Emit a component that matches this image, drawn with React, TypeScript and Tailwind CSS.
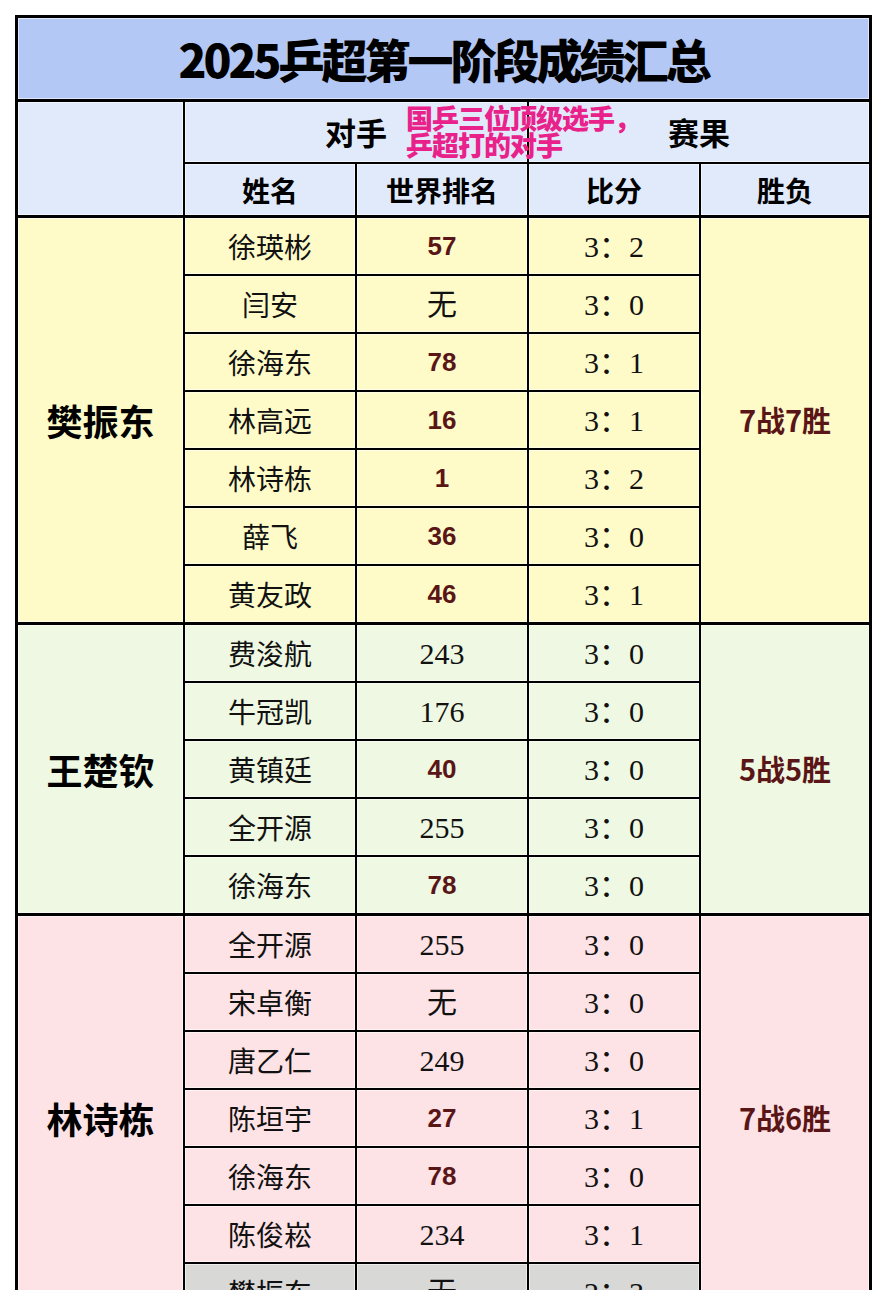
import React from 'react';

type Match = { name: string; rank: string; score: string; lost?: boolean };
type Group = { player: string; result: string; bg: string; span: string; rows: Match[] };

const GROUPS: Group[] = [
  {
    player: '樊振东',
    result: '7战7胜',
    bg: 'bg-[#fefbc9]',
    span: 'row-span-7',
    rows: [
      { name: '徐瑛彬', rank: '57', score: '3：2' },
      { name: '闫安', rank: '无', score: '3：0' },
      { name: '徐海东', rank: '78', score: '3：1' },
      { name: '林高远', rank: '16', score: '3：1' },
      { name: '林诗栋', rank: '1', score: '3：2' },
      { name: '薛飞', rank: '36', score: '3：0' },
      { name: '黄友政', rank: '46', score: '3：1' },
    ],
  },
  {
    player: '王楚钦',
    result: '5战5胜',
    bg: 'bg-[#eef8e2]',
    span: 'row-span-5',
    rows: [
      { name: '费浚航', rank: '243', score: '3：0' },
      { name: '牛冠凯', rank: '176', score: '3：0' },
      { name: '黄镇廷', rank: '40', score: '3：0' },
      { name: '全开源', rank: '255', score: '3：0' },
      { name: '徐海东', rank: '78', score: '3：0' },
    ],
  },
  {
    player: '林诗栋',
    result: '7战6胜',
    bg: 'bg-[#fde3e6]',
    span: 'row-span-7',
    rows: [
      { name: '全开源', rank: '255', score: '3：0' },
      { name: '宋卓衡', rank: '无', score: '3：0' },
      { name: '唐乙仁', rank: '249', score: '3：0' },
      { name: '陈垣宇', rank: '27', score: '3：1' },
      { name: '徐海东', rank: '78', score: '3：0' },
      { name: '陈俊崧', rank: '234', score: '3：1' },
      { name: '樊振东', rank: '无', score: '2：3', lost: true },
    ],
  },
];

const sans = "font-['Noto_Sans_CJK_SC','Noto_Sans',sans-serif]";
const serif = "font-['Liberation_Serif','Noto_Sans_CJK_SC',serif]";
const cell = 'flex items-center justify-center shadow-[inset_0_0_0_1px_rgba(255,255,255,0.55)]';

function RankText({ rank }: { rank: string }) {
  const top = /^\d+$/.test(rank) && Number(rank) < 100;
  if (top) {
    return <span className="font-['Liberation_Sans',sans-serif] text-[26px] font-bold text-[#5a1616]">{rank}</span>;
  }
  return <span className={`${serif} text-[30px] text-[#111]`}>{rank}</span>;
}

function GroupBlock({ group }: { group: Group }) {
  return (
    <div
      className="grid grid-cols-[165px_170px_170px_170px_1fr] gap-[2px] bg-black"
      style={{ gridTemplateRows: `repeat(${group.rows.length}, 56px)` }}
    >
      <div className={`${cell} ${group.bg} col-start-1 row-start-1 ${group.span}`}>
        <span className={`${sans} text-[36px] font-bold text-black`}>{group.player}</span>
      </div>
      <div className={`${cell} ${group.bg} col-start-5 row-start-1 ${group.span}`}>
        <span className={`${sans} text-[29px] font-bold text-[#5a1616]`}>{group.result}</span>
      </div>
      {group.rows.map((m, i) => {
        const bg = m.lost ? 'bg-[#d8d8d6]' : group.bg;
        return (
          <React.Fragment key={i}>
            <div className={`${cell} ${bg}`}>
              <span className={`${sans} text-[28px] text-[#111]`}>{m.name}</span>
            </div>
            <div className={`${cell} ${bg}`}>
              <RankText rank={m.rank} />
            </div>
            <div className={`${cell} ${bg}`}>
              <span className={`${serif} text-[30px] text-[#111]`}>{m.score}</span>
            </div>
          </React.Fragment>
        );
      })}
    </div>
  );
}

export default function App() {
  return (
    <div className="min-h-[1290px] bg-white pl-[15px] pt-[15px]">
      <div className="relative w-[857px] border-[3px] border-black bg-black flex flex-col gap-[3px]">
        {/* Title */}
        <div className={`${cell} h-[81px] bg-[#b3c8f5]`}>
          <span className={`${sans} text-[46px] font-black tracking-[-3px] text-black`}>2025乒超第一阶段成绩汇总</span>
        </div>

        {/* Header rows */}
        <div className="grid grid-cols-[165px_170px_170px_170px_1fr] grid-rows-[60px_51px] gap-[2px] bg-black">
          <div className={`${cell} bg-[#e1eafa] col-start-1 row-start-1 row-span-2`} />
          <div className={`${cell} bg-[#e1eafa] col-span-2`}>
            <span className={`${sans} text-[31px] font-bold text-black`}>对手</span>
          </div>
          <div className={`${cell} bg-[#e1eafa] col-span-2`}>
            <span className={`${sans} text-[31px] font-bold text-black`}>赛果</span>
          </div>
          {['姓名', '世界排名', '比分', '胜负'].map((h) => (
            <div key={h} className={`${cell} bg-[#e1eafa]`}>
              <span className={`${sans} text-[28px] font-bold text-black`}>{h}</span>
            </div>
          ))}
        </div>

        {GROUPS.map((g) => (
          <GroupBlock key={g.player} group={g} />
        ))}

        {/* pink annotation laid over the header */}
        <div className={`absolute left-[388px] top-[86px] ${sans} text-[27px] font-black leading-[27px] tracking-[-1px] text-[#e8228a]`}>
          <div>国乒三位顶级选手，</div>
          <div>乒超打的对手</div>
        </div>
      </div>
    </div>
  );
}
